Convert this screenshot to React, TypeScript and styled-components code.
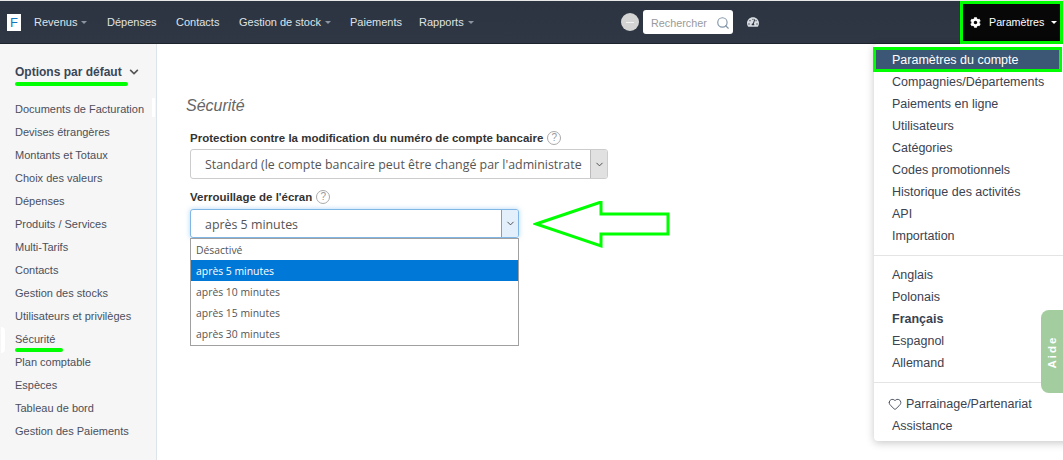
import React from "react";
import styled, { createGlobalStyle } from "styled-components";
import { FaCog, FaChevronDown, FaTachometerAlt } from "react-icons/fa";
import { Search, Heart, ChevronDown } from "lucide-react";

const leftLinks = [
  { label: "Revenus", caret: true, width: 73 },
  { label: "Dépenses", caret: false, width: 69 },
  { label: "Contacts", caret: false, width: 63 },
  { label: "Gestion de stock", caret: true, width: 111 },
  { label: "Paiements", caret: false, width: 69 },
  { label: "Rapports", caret: true, width: 62 },
];

const sideLinks = [
  "Documents de Facturation",
  "Devises étrangères",
  "Montants et Totaux",
  "Choix des valeurs",
  "Dépenses",
  "Produits / Services",
  "Multi-Tarifs",
  "Contacts",
  "Gestion des stocks",
  "Utilisateurs et privilèges",
  "Sécurité",
  "Plan comptable",
  "Espèces",
  "Tableau de bord",
  "Gestion des Paiements",
];

const accountLinks = [
  "Compagnies/Départements",
  "Paiements en ligne",
  "Utilisateurs",
  "Catégories",
  "Codes promotionnels",
  "Historique des activités",
  "API",
  "Importation",
];

const languages = ["Anglais", "Polonais", "Français", "Espagnol", "Allemand"];
const lockOptions = ["Désactivé", "après 5 minutes", "après 10 minutes", "après 15 minutes", "après 30 minutes"];

const App: React.FC = () => {
  return (
    <Page>
      <GlobalStyle />
      <TopStrip />
      <Navbar>
        <Logo>F</Logo>
        <NavLinks>
          {leftLinks.map((link) => (
            <NavLink key={link.label} $width={link.width}>
              {link.label}
              {link.caret && <Caret />}
            </NavLink>
          ))}
        </NavLinks>
        <Avatar />
        <SearchBox>
          <SearchText>Rechercher</SearchText>
          <Search size={14} color="#8496a8" strokeWidth={2} />
        </SearchBox>
        <GaugeButton>
          <FaTachometerAlt size={12} />
        </GaugeButton>
        <SettingsButton>
          <FaCog size={11} />
          <span>Paramètres</span>
          <Caret $light />
        </SettingsButton>
      </Navbar>

      <Body>
        <Sidebar>
          <SideTitle>
            <Underlined $lineWidth={113}>Options par défaut</Underlined>
            <FaChevronDown size={10} color="#555" />
          </SideTitle>
          <SideList>
            {sideLinks.map((link) => (
              <SideItem key={link} $current={link === "Sécurité"}>
                {link === "Sécurité" ? <Underlined $lineWidth={48}>{link}</Underlined> : link}
              </SideItem>
            ))}
          </SideList>
        </Sidebar>

        <Main>
          <Heading>Sécurité</Heading>
          <Form>
            <Label>
              Protection contre la modification du numéro de compte bancaire
              <Help>?</Help>
            </Label>
            <SelectBox $width={418}>
              <SelectValue>Standard (le compte bancaire peut être changé par l'administrate</SelectValue>
              <SelectArrow>
                <ChevronDown size={11} strokeWidth={2} />
              </SelectArrow>
            </SelectBox>
            <Label $second>
              Verrouillage de l'écran
              <Help>?</Help>
            </Label>
            <LockField>
              <SelectBox $width={329} $focused>
                <SelectValue>après 5 minutes</SelectValue>
                <SelectArrow $focused>
                  <ChevronDown size={11} strokeWidth={2} />
                </SelectArrow>
              </SelectBox>
              <OptionList>
                {lockOptions.map((option) => (
                  <Option key={option} $selected={option === "après 5 minutes"}>
                    {option}
                  </Option>
                ))}
              </OptionList>
              <Arrow width="140" height="50" viewBox="0 0 140 50">
                <polygon points="3,23 68,1 68,13 135,13 135,33 68,33 68,45" fill="#fff" stroke="#00ff00" strokeWidth="3" />
              </Arrow>
            </LockField>
          </Form>
        </Main>

        <Menu>
          <ActiveItem>Paramètres du compte</ActiveItem>
          {accountLinks.map((link) => (
            <MenuItem key={link}>{link}</MenuItem>
          ))}
          <Divider $bottom={8} />
          {languages.map((lang) => (
            <MenuItem key={lang} $bold={lang === "Français"}>
              {lang}
            </MenuItem>
          ))}
          <Divider $bottom={10} />
          <MenuItem $icon>
            <Heart size={14} strokeWidth={1.5} />
            Parrainage/Partenariat
          </MenuItem>
          <MenuItem>Assistance</MenuItem>
        </Menu>

        <HelpTab>
          <span>Aide</span>
        </HelpTab>
      </Body>
    </Page>
  );
};

export default App;

// Styled Components
const GlobalStyle = createGlobalStyle`
  html, body {
    margin: 0;
    padding: 0;
    background: #fff;
  }
  * {
    box-sizing: border-box;
  }
`;

const Page = styled.div`
  width: 1063px;
  height: 460px;
  overflow: hidden;
  display: flex;
  flex-direction: column;
  font-family: "Liberation Sans", Arial, sans-serif;
`;

const TopStrip = styled.div`
  height: 1px;
  background: #e8e8e8;
`;

const Navbar = styled.header`
  height: 43px;
  flex: none;
  display: flex;
  align-items: center;
  padding-left: 7px;
  background: linear-gradient(#2b3440, #2e3743);
  border-bottom: 1px solid #1e242c;
`;

const Logo = styled.div`
  width: 14px;
  height: 17px;
  margin-right: 13px;
  background: #fff;
  color: #1177c0;
  font-size: 13px;
  line-height: 17px;
  text-align: center;
`;

const NavLinks = styled.nav`
  display: flex;
  width: 587px;
`;

const NavLink = styled.a<{ $width: number }>`
  width: ${(p) => p.$width}px;
  display: flex;
  align-items: center;
  color: #dfe3e8;
  font-size: 11px;
`;

const Caret = styled.i<{ $light?: boolean }>`
  width: 0;
  height: 0;
  margin-left: ${(p) => (p.$light ? 6 : 4)}px;
  border-left: 3px solid transparent;
  border-right: 3px solid transparent;
  border-top: 3px solid ${(p) => (p.$light ? "#fff" : "#8b95a1")};
`;

const Avatar = styled.div`
  width: 18px;
  height: 18px;
  margin-right: 4px;
  border-radius: 50%;
  background: #d4d4d4;
  position: relative;
  &::after {
    content: "";
    position: absolute;
    left: 5px;
    right: 5px;
    top: 9px;
    height: 1px;
    background: #f4f4f4;
  }
`;

const SearchBox = styled.div`
  width: 90px;
  height: 24px;
  display: flex;
  align-items: center;
  justify-content: space-between;
  padding: 1px 3px 0 8px;
  background: #fff;
  border-radius: 3px;
`;

const SearchText = styled.span`
  color: #9a9a9a;
  font-size: 10.8px;
`;

const GaugeButton = styled.div`
  margin-left: 14px;
  color: #d8dce0;
  display: flex;
`;

const SettingsButton = styled.div`
  margin-left: auto;
  width: 103px;
  height: 43px;
  display: flex;
  align-items: center;
  padding-left: 7px;
  gap: 8px;
  background: #070707;
  border: 3px solid #00ff00;
  color: #fff;
  font-size: 10.7px;
  i {
    margin-left: -1px;
  }
`;

const Body = styled.div`
  flex: 1;
  display: flex;
  position: relative;
  min-height: 0;
`;

const Sidebar = styled.aside`
  width: 157px;
  flex: none;
  padding: 20px 0 0 15px;
  background: #f6f6f6;
  border-right: 1px solid #dde4ea;
  position: relative;
  &::after {
    content: "";
    position: absolute;
    right: 1px;
    top: 54px;
    width: 3px;
    height: 19px;
    background: #fff;
  }
`;

const SideTitle = styled.div`
  display: flex;
  align-items: center;
  gap: 7px;
  height: 16px;
  color: #3a4656;
  font-size: 12px;
  font-weight: bold;
`;

const Underlined = styled.span<{ $lineWidth: number }>`
  position: relative;
  &::after {
    content: "";
    position: absolute;
    left: 0;
    bottom: -7px;
    width: ${(p) => p.$lineWidth}px;
    height: 4px;
    border-radius: 2px;
    background: #00ff00;
  }
`;

const SideList = styled.ul`
  list-style: none;
  margin: 18px 0 0;
  padding: 0;
`;

const SideItem = styled.li<{ $current?: boolean }>`
  height: 23px;
  line-height: 23px;
  color: #4b4f5c;
  font-size: 11px;
  white-space: nowrap;
  position: relative;
  ${(p) =>
    p.$current &&
    `&::before {
      content: "";
      position: absolute;
      left: -14px;
      top: -1px;
      width: 4px;
      height: 26px;
      border-radius: 0 4px 4px 0;
      background: #fff;
    }`}
`;

const Main = styled.main`
  flex: 1;
  padding: 52px 0 0 29px;
`;

const Heading = styled.h2`
  margin: 0;
  color: #666;
  font-size: 16px;
  font-style: italic;
  font-weight: normal;
  line-height: 20px;
`;

const Form = styled.form`
  margin: 14px 0 0 4px;
`;

const Label = styled.label<{ $second?: boolean }>`
  display: flex;
  align-items: center;
  height: 16px;
  margin: ${(p) => (p.$second ? "10px 0 4px" : "0 0 3px")};
  color: #333;
  font-size: 11.5px;
  font-weight: bold;
`;

const Help = styled.span`
  width: 14px;
  height: 14px;
  margin-left: 4px;
  border: 1px solid #aaa;
  border-radius: 50%;
  color: #999;
  font-size: 10px;
  font-weight: normal;
  line-height: 12px;
  text-align: center;
`;

const SelectBox = styled.div<{ $width: number; $focused?: boolean }>`
  width: ${(p) => p.$width}px;
  height: ${(p) => (p.$focused ? 29 : 30)}px;
  display: flex;
  background: #fff;
  border: 1px solid ${(p) => (p.$focused ? "#7fb6e6" : "#ccc")};
  border-radius: 3px;
  ${(p) => p.$focused && "box-shadow: 0 0 5px rgba(102, 175, 233, 0.5);"}
`;

const SelectValue = styled.span`
  flex: 1;
  min-width: 0;
  padding-left: 14px;
  white-space: nowrap;
  color: #555;
  font-family: "Open Sans", sans-serif;
  font-size: 12.4px;
  line-height: 30px;
`;

const SelectArrow = styled.span<{ $focused?: boolean }>`
  width: 17px;
  flex: none;
  display: flex;
  align-items: center;
  justify-content: center;
  color: #444;
  background: ${(p) => (p.$focused ? "#e3effa" : "#e1e1e1")};
  border-left: 1px solid ${(p) => (p.$focused ? "#6aa5d8" : "#bbb")};
  border-radius: 0 2px 2px 0;
`;

const LockField = styled.div`
  position: relative;
`;

const OptionList = styled.ul`
  position: absolute;
  left: 0;
  top: 29px;
  width: 329px;
  margin: 0;
  padding: 0 0 1px;
  list-style: none;
  background: #fff;
  border: 1px solid #a0a0a0;
`;

const Option = styled.li<{ $selected?: boolean }>`
  height: 21px;
  padding-left: 5px;
  color: ${(p) => (p.$selected ? "#fff" : "#555")};
  background: ${(p) => (p.$selected ? "#0078d7" : "transparent")};
  font-family: "Open Sans", sans-serif;
  font-size: 10.4px;
  line-height: 23px;
`;

const Arrow = styled.svg`
  position: absolute;
  left: 343px;
  top: -8px;
`;

const Menu = styled.div`
  position: absolute;
  left: 874px;
  top: 0;
  width: 200px;
  height: 397px;
  padding-top: 3px;
  background: #fff;
  border-radius: 4px;
  box-shadow: 0 2px 8px rgba(0, 0, 0, 0.22);
`;

const MenuItem = styled.div<{ $bold?: boolean; $icon?: boolean }>`
  height: 22px;
  display: flex;
  align-items: center;
  gap: 4px;
  padding-left: ${(p) => (p.$icon ? 14 : 18)}px;
  color: #3b4250;
  font-size: 12.5px;
  font-weight: ${(p) => (p.$bold ? "bold" : "normal")};
  white-space: nowrap;
`;

const ActiveItem = styled.div`
  width: 189px;
  height: 25px;
  margin: 0 0 -1px -1px;
  display: flex;
  align-items: center;
  padding-left: 16px;
  background: #3c5675;
  border: 3px solid #00ff00;
  color: #fff;
  font-size: 12.5px;
  position: relative;
`;

const Divider = styled.hr<{ $bottom: number }>`
  margin: 8px 0 ${(p) => p.$bottom}px;
  border: 0;
  border-top: 1px solid #e4e4e4;
`;

const HelpTab = styled.div`
  position: absolute;
  right: 0;
  top: 266px;
  width: 22px;
  height: 83px;
  display: flex;
  align-items: center;
  justify-content: center;
  background: #a3cd9f;
  border-radius: 8px 0 0 8px;
  color: #fff;
  font-size: 11.5px;
  font-weight: bold;
  letter-spacing: 2px;
  span {
    transform: rotate(-90deg);
  }
`;
